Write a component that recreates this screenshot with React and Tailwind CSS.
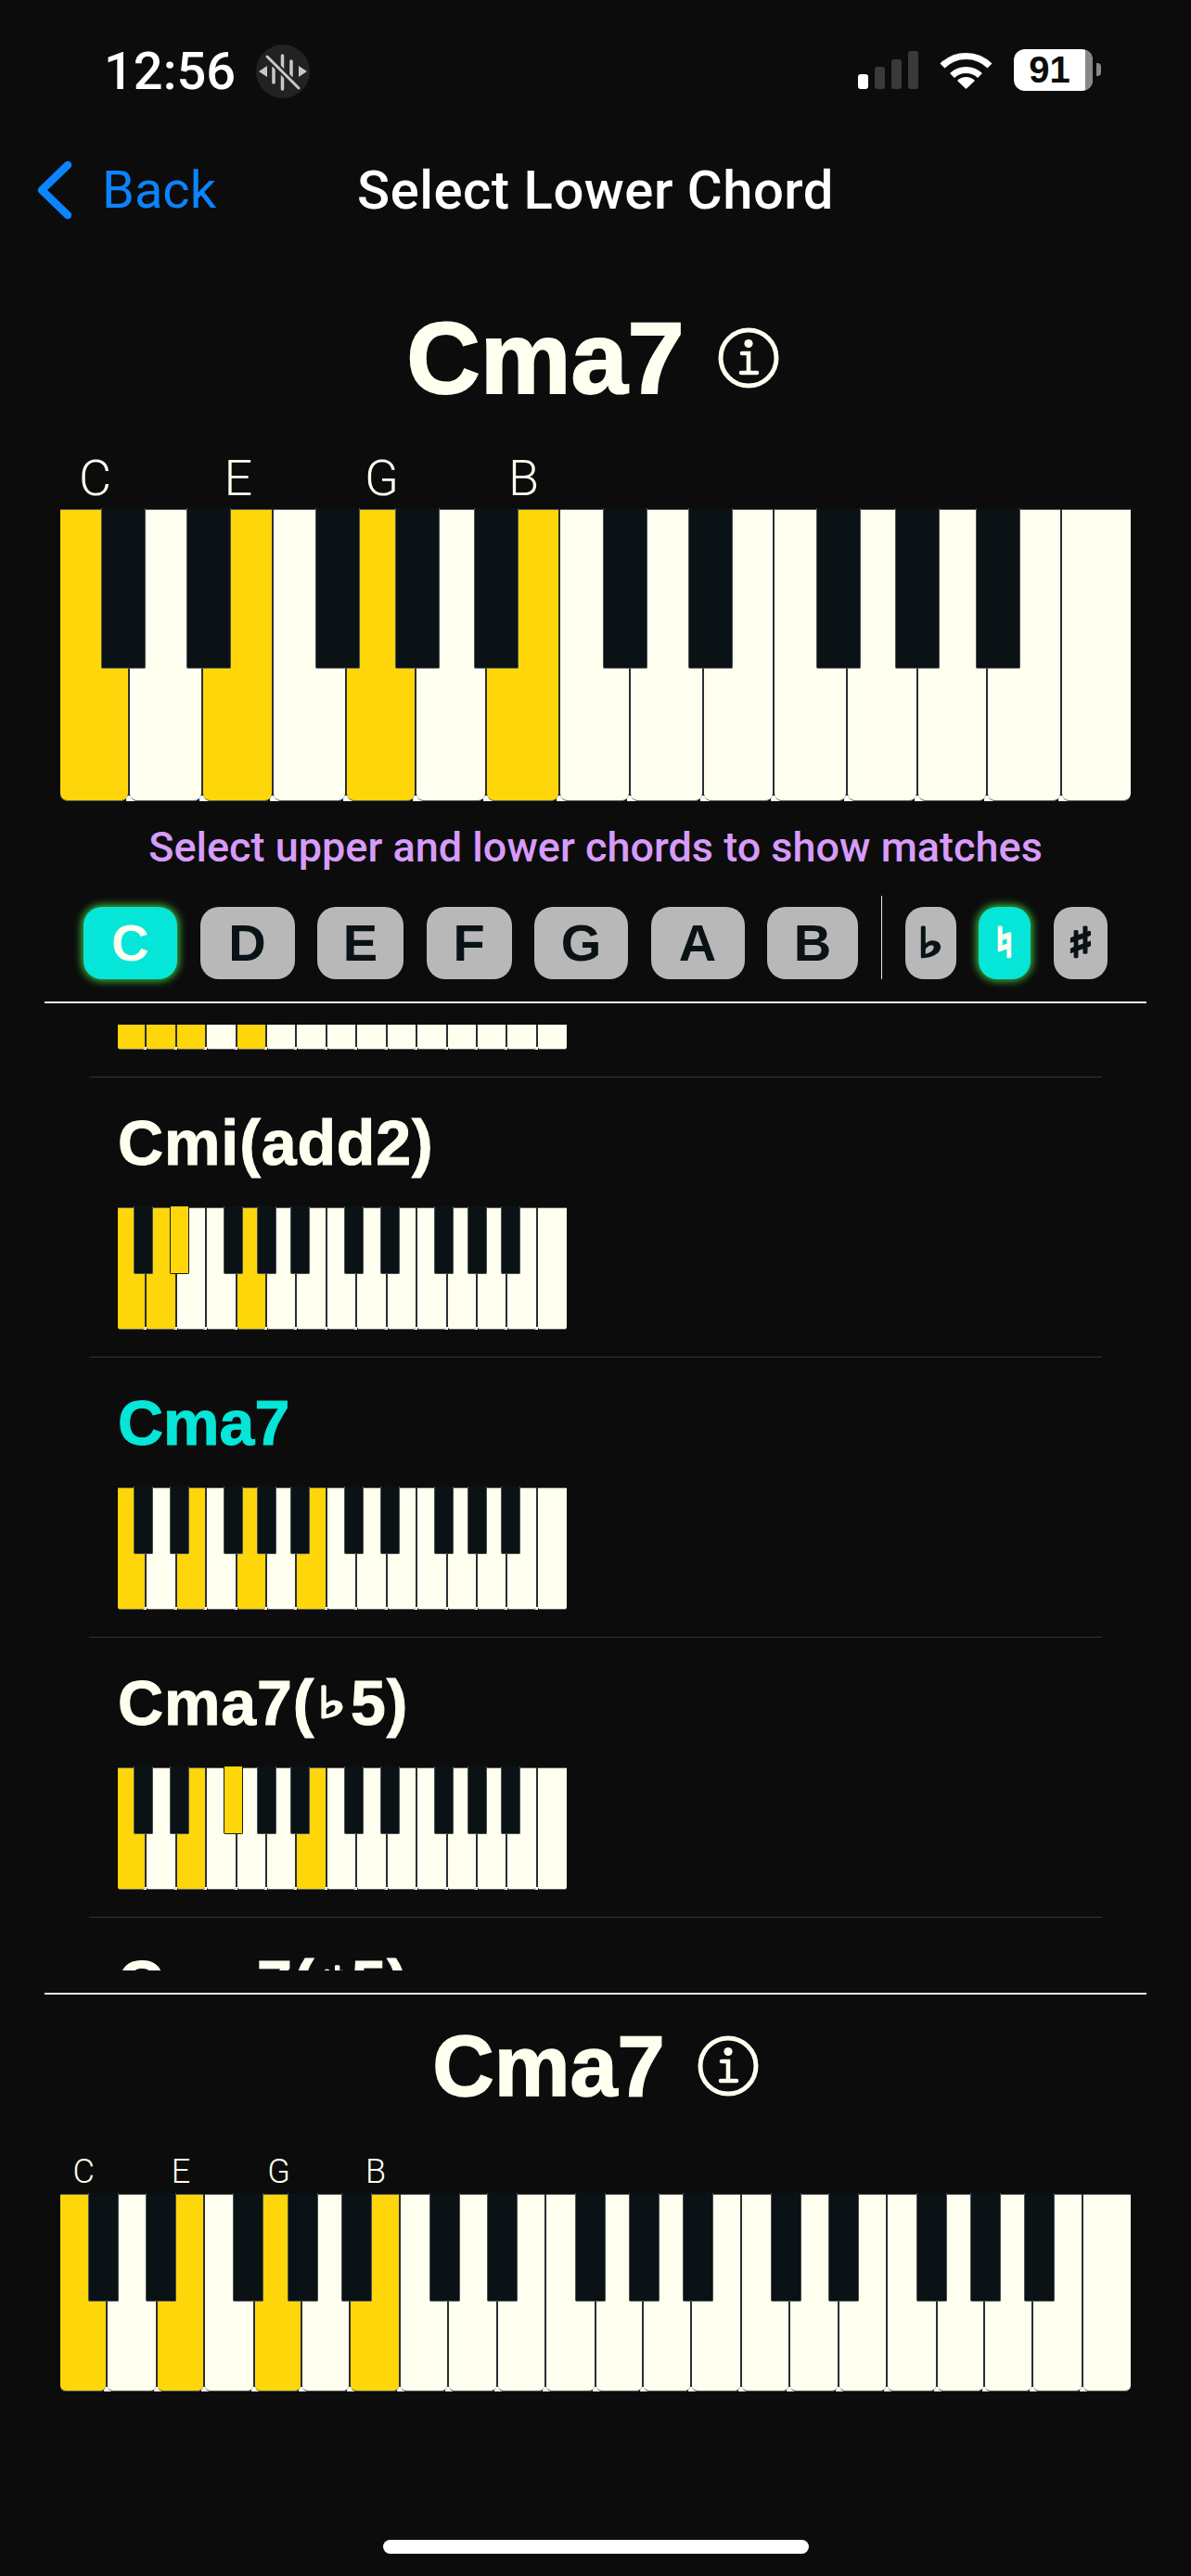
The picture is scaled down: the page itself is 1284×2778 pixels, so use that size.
import React from "react";

const CREAM = "#fffff0";
const YELLOW = "#ffd60a";

// key edges measured off the three keyboard sizes
const BIG = {
  edges: [65, 140, 219, 294.5, 374, 449, 525, 604, 680, 759, 835, 914, 990, 1065, 1144.5, 1219],
  blacks: [109, 201, 340, 425.5, 511, 650, 742, 880, 965, 1052],
  blackW: 48,
  height: 315,
  blackH: 172,
  radius: "rounded-b-[8px]",
  speck: "w-[10px] h-[6px]",
};
const WIDE = {
  edges: [65, 115.5, 169.5, 220.7, 274.8, 326.4, 378, 432, 483.6, 537, 589, 643, 694.4, 746, 800, 852, 905.3, 957, 1011, 1062.5, 1114, 1168, 1219],
  blacks: [94.6, 157.2, 251.4, 310, 368, 462.7, 525.4, 619.6, 678, 736.2, 830.8, 893, 987.6, 1046, 1104],
  blackW: 33,
  height: 213,
  blackH: 116,
  radius: "rounded-b-[6px]",
  speck: "w-[8px] h-[5px]",
};
const MINI = {
  edges: [127, 158, 191, 223, 256, 288, 320, 353, 385, 418, 450, 483, 515, 547, 580, 611],
  blacks: [144, 183, 241, 277, 313, 371, 410, 468, 504, 540],
  blackW: 21,
  height: 132,
  blackH: 72,
  radius: "rounded-b-[3px]",
  speck: "w-[4px] h-[3px]",
};

function Piano({ size, lit = [], litBlack = [] }) {
  const { edges, blacks, blackW, height, blackH, radius, speck } = size;
  const left = edges[0];
  const gap = 2;
  return (
    <div className="relative" style={{ width: edges[edges.length - 1] - left, height, marginLeft: left }}>
      <div className="absolute inset-x-[4px] top-0 bottom-[3px] bg-[#2b2e2e]" />
      {edges.slice(1, -1).map((x, i) => (
        <div key={i} className={`absolute bottom-0 bg-white ${speck}`} style={{ left: x - left - 4 }} />
      ))}
      <div className="relative flex h-full">
        {edges.slice(0, -1).map((x, i) => {
          const last = i === edges.length - 2;
          return (
            <div
              key={i}
              className={`h-full box-border border-y border-[#5a5f5c] ${radius}`}
              style={{
                width: edges[i + 1] - x - (last ? 0 : gap),
                marginRight: last ? 0 : gap,
                background: lit.includes(i) ? YELLOW : CREAM,
              }}
            />
          );
        })}
      </div>
      {blacks.map((x, i) => (
        <div
          key={i}
          className={`absolute top-[-1px] box-border border-x border-b rounded-b-[2px] ${
            litBlack.includes(i) ? "bg-[#ffd60a] border-[#1c1a08]" : "bg-[#0b1215] border-[#4b5150]"
          }`}
          style={{ left: x - left, width: blackW, height: blackH + 1 }}
        />
      ))}
    </div>
  );
}

function Labels({ size, className }) {
  const { edges } = size;
  const notes = ["C", "", "E", "", "G", "", "B"];
  return (
    <div className={`flex items-center font-['Roboto'] font-light text-[#fffff0] leading-none ${className}`} style={{ marginLeft: edges[0] }}>
      {notes.map((n, i) => (
        <div key={i} className="text-center" style={{ width: edges[i + 1] - edges[i] }}>
          {n}
        </div>
      ))}
    </div>
  );
}

function InfoIcon() {
  return (
    <svg width="66" height="66" viewBox="0 0 66 66" fill="none" stroke="#fffff0" strokeWidth="5" strokeLinecap="round">
      <circle cx="33" cy="33" r="30" />
      <circle cx="33" cy="17.5" r="4.6" fill="#fffff0" stroke="none" />
      <path d="M26 28 H33 V49 M25 49 H42" strokeWidth="4.6" />
    </svg>
  );
}

function NoteButton({ label, width, active, glyph }) {
  return (
    <div
      className={`h-[78px] rounded-[20px] flex items-center justify-center leading-none ${
        active ? "bg-[#05e6d8] text-[#fffff0] shadow-[0_0_9px_2px_#3fbe3f]" : "bg-[#b8b8b8] text-[#0b1215]"
      } font-['Liberation_Sans'] font-bold text-[56px]`}
      style={{ width }}
    >
      {glyph ? (
        <span className="inline-block scale-x-[1.35] font-['DejaVu_Sans'] text-[44px] [-webkit-text-stroke:2.5px_currentColor]">{label}</span>
      ) : (
        label
      )}
    </div>
  );
}

function ChordRow({ name, active, wide, lit, litBlack }) {
  return (
    <div className="h-[302px] border-b border-[#333333] pt-[36px] box-border">
      <div
        className={`h-[68px] flex items-center pl-[31px] font-['Liberation_Sans'] font-bold text-[68px] leading-none [-webkit-text-stroke:1px_currentColor] ${
          active ? "text-[#05e6d8]" : "text-[#fffff0]"
        } ${wide ? "tracking-[0.9px]" : ""}`}
      >
        {name}
      </div>
      <div className="mt-[36px] ml-[-96px]">
        <Piano size={MINI} lit={lit} litBlack={litBlack} />
      </div>
    </div>
  );
}

const accidental = (g) => (
  <span className="inline-block scale-x-[1.4] mx-[8px] font-['DejaVu_Sans'] text-[46px] [-webkit-text-stroke:2.5px_currentColor]">{g}</span>
);

export default function App() {
  return (
    <div className="w-[1284px] h-[2778px] bg-[#0c0c0c] flex flex-col overflow-hidden font-['Liberation_Sans']">
      {/* status bar */}
      <div className="h-[154px] flex items-center justify-between pl-[112px] pr-[97px]">
        <div className="flex items-center">
          <span className="font-['Roboto'] font-medium text-[56px] leading-none text-white">12:56</span>
          <div className="ml-[22px] w-[58px] h-[58px] rounded-full bg-[#222222]">
            <svg width="58" height="58" viewBox="0 0 58 58" fill="none">
              <path d="M3 29 L12 23 V35 Z M55 29 L46 23 V35 Z" fill="#c8c8c8" />
              <path d="M19 25 V41 M28.5 12 V48 M38 18 V34" stroke="#c8c8c8" strokeWidth="3.5" strokeLinecap="round" />
              <path d="M12 13 L46 47" stroke="#222222" strokeWidth="7" />
              <path d="M12 13 L46 47" stroke="#c8c8c8" strokeWidth="3" strokeLinecap="round" />
            </svg>
          </div>
        </div>
        <div className="flex items-center mb-[4px]">
          <div className="flex items-end gap-[7px] h-[41px]">
            <div className="w-[11px] h-[16px] rounded-[3px] bg-white" />
            <div className="w-[11px] h-[24px] rounded-[3px] bg-[#3a3a3a]" />
            <div className="w-[11px] h-[32px] rounded-[3px] bg-[#3a3a3a]" />
            <div className="w-[11px] h-[41px] rounded-[3px] bg-[#3a3a3a]" />
          </div>
          <svg className="ml-[23px]" width="57" height="42" viewBox="0 0 57 42" fill="none">
            <path d="M3 17 A36 36 0 0 1 54 17" stroke="white" strokeWidth="7" />
            <path d="M13.5 27.5 A21.5 21.5 0 0 1 43.5 27.5" stroke="white" strokeWidth="7" />
            <path d="M28.5 42 L19 33 A13.5 13.5 0 0 1 38 33 Z" fill="white" />
          </svg>
          <div className="ml-[23px] w-[85px] h-[45px] rounded-[12px] bg-white overflow-hidden flex">
            <div className="flex-1 flex items-center justify-center text-[40px] font-bold leading-none text-[#0c0c0c]">91</div>
            <div className="w-[8px] bg-[#888888]" />
          </div>
          <div className="ml-[4px] w-[5px] h-[14px] rounded-r-[4px] bg-[#888888]" />
        </div>
      </div>

      {/* nav */}
      <div className="h-[102px] grid grid-cols-[1fr_auto_1fr] items-center font-['Roboto'] text-[56px] leading-none">
        <div className="flex items-center pl-[40px]">
          <svg width="38" height="64" viewBox="0 0 38 64" fill="none">
            <path d="M33 5 L5 32 L33 59" stroke="#0a84ff" strokeWidth="8.5" strokeLinecap="round" strokeLinejoin="round" />
          </svg>
          <span className="ml-[32px] text-[#0a84ff]">Back</span>
        </div>
        <span className="text-white font-medium text-[58px] tracking-[0.5px]">Select Lower Chord</span>
        <div />
      </div>

      {/* selected chord */}
      <div className="mt-[80px] h-[100px] flex items-center justify-center gap-[36px] pr-[6px] text-[#fffff0]">
        <span className="font-bold text-[110px] leading-none [-webkit-text-stroke:2px_currentColor]">Cma7</span>
        <InfoIcon />
      </div>
      <Labels size={BIG} className="mt-[53px] h-[54px] text-[54px]" />
      <div className="mt-[6px]">
        <Piano size={BIG} lit={[0, 2, 4, 6]} />
      </div>

      <div className="mt-[24px] h-[50px] flex items-center justify-center font-['Roboto'] font-medium text-[45px] leading-none text-[#d89bfa]">
        Select upper and lower chords to show matches
      </div>

      {/* note picker */}
      <div className="mt-[28px] h-[90px] flex items-end pl-[90px] gap-[24.5px]">
        <NoteButton label="C" width={101} active />
        <NoteButton label="D" width={102} />
        <NoteButton label="E" width={93} />
        <NoteButton label="F" width={92} />
        <NoteButton label="G" width={101} />
        <NoteButton label="A" width={101} />
        <NoteButton label="B" width={98} />
        <div className="w-[1.5px] h-[90px] bg-[#e8e8e8]" />
        <NoteButton label="♭" width={55} glyph />
        <NoteButton label="♮" width={56} active glyph />
        <NoteButton label="♯" width={58} glyph />
      </div>
      <div className="mt-[24px] mx-[48px] h-[2px] bg-[#f0f0e8]" />

      {/* chord list, scrolled */}
      <div className="mt-[23px] h-[1020px] overflow-hidden">
        <div className="mt-[-245px] mx-[96px]">
          <ChordRow name="" lit={[0, 1, 2, 4]} />
          <ChordRow name="Cmi(add2)" wide lit={[0, 1, 4]} litBlack={[1]} />
          <ChordRow name="Cma7" active lit={[0, 2, 4, 6]} />
          <ChordRow name={<>Cma7({accidental("♭")}5)</>} wide lit={[0, 2, 6]} litBlack={[2]} />
          <ChordRow name={<>Cma7({accidental("♯")}5)</>} wide lit={[0, 2, 6]} litBlack={[3]} />
        </div>
      </div>
      <div className="mt-[24px] mx-[48px] h-[2px] bg-[#f0f0e8]" />

      {/* bottom chord */}
      <div className="mt-[32px] h-[90px] flex items-center justify-center gap-[35px] text-[#fffff0]">
        <span className="font-bold text-[92px] leading-none [-webkit-text-stroke:1.5px_currentColor]">Cma7</span>
        <InfoIcon />
      </div>
      <Labels size={WIDE} className="mt-[49px] h-[40px] text-[36px]" />
      <div className="mt-[4px]">
        <Piano size={WIDE} lit={[0, 2, 4, 6]} />
      </div>

      <div className="mt-[160px] mx-auto w-[459px] h-[15px] rounded-full bg-white" />
    </div>
  );
}
